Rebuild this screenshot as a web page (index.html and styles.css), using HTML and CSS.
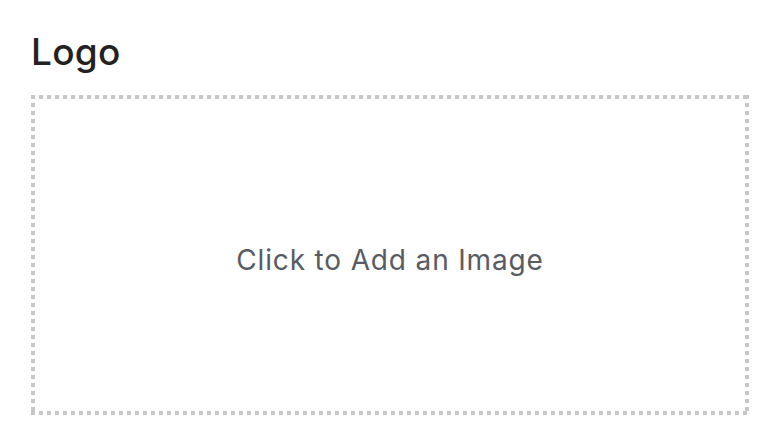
FILE: index.html
```html
<!DOCTYPE html>
<html>
<head>
<meta charset="utf-8">
<link rel="stylesheet" href="styles.css">
</head>
<body>
<div class="page">
  <h1 class="title">Logo</h1>
  <div class="dropzone">
    <span class="dropzone-text">Click to Add an Image</span>
  </div>
</div>
</body>
</html>
```

FILE: styles.css
```css
html, body {
  margin: 0;
  padding: 0;
  background: #ffffff;
}
.page {
  padding: 28px 26px 0 31px;
  display: flex;
  flex-direction: column;
  font-family: Inter, "Open Sans", sans-serif;
}
.title {
  margin: 0;
  font-size: 37px;
  font-weight: 500;
  line-height: 48px;
  color: #222222;
  letter-spacing: 0.3px;
}
.dropzone {
  margin-top: 19px;
  width: 718px;
  height: 320px;
  box-sizing: border-box;
  display: flex;
  align-items: center;
  justify-content: center;
  background:
    repeating-linear-gradient(to right, #c6c6c6 0 4px, transparent 4px 8px) left top / 100% 4px no-repeat,
    repeating-linear-gradient(to right, #c6c6c6 0 4px, transparent 4px 8px) left bottom / 100% 4px no-repeat,
    repeating-linear-gradient(to bottom, #c6c6c6 0 4px, transparent 4px 8px) left top / 4px 100% no-repeat,
    repeating-linear-gradient(to bottom, #c6c6c6 0 4px, transparent 4px 8px) right top / 4px 100% no-repeat;
}
.dropzone-text {
  font-size: 28px;
  font-weight: 400;
  color: #575c64;
  letter-spacing: 0.85px;
  padding-top: 9px;
}
```
